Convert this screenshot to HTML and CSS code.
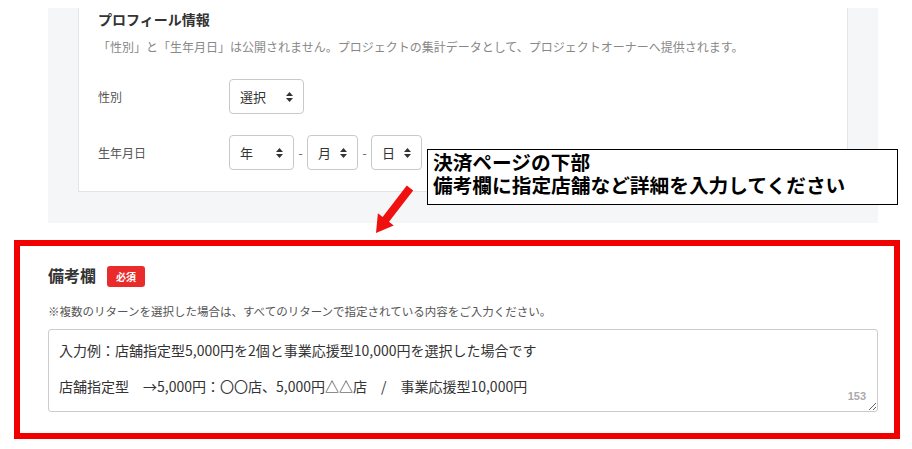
FILE: index.html
```html
<!DOCTYPE html>
<html lang="ja">
<head>
    <meta charset="UTF-8">
    <meta name="viewport" content="width=device-width, initial-scale=1.0">
    <title>備考欄</title>
    <link rel="stylesheet" href="styles.css">
</head>
<body>
    <div class="page">
        <div class="profile-panel">
            <div class="profile-card">
                <h2>プロフィール情報</h2>
                <p class="note">「性別」と「生年月日」は公開されません。プロジェクトの集計データとして、プロジェクトオーナーへ提供されます。</p>
                <div class="form-rows">
                    <div class="form-row">
                        <div class="form-label">性別</div>
                        <div class="select w-gender">選択<svg class="updown" viewBox="0 0 7 10"><path d="M3.5 0 7 4H0z M3.5 10 7 6H0z"/></svg></div>
                    </div>
                    <div class="form-row">
                        <div class="form-label">生年月日</div>
                        <div class="select w-year">年<svg class="updown" viewBox="0 0 7 10"><path d="M3.5 0 7 4H0z M3.5 10 7 6H0z"/></svg></div>
                        <span class="dash">-</span>
                        <div class="select w-small">月<svg class="updown" viewBox="0 0 7 10"><path d="M3.5 0 7 4H0z M3.5 10 7 6H0z"/></svg></div>
                        <span class="dash">-</span>
                        <div class="select w-small">日<svg class="updown" viewBox="0 0 7 10"><path d="M3.5 0 7 4H0z M3.5 10 7 6H0z"/></svg></div>
                    </div>
                </div>
            </div>
        </div>

        <div class="remarks">
            <div class="remarks-title">
                <h3>備考欄</h3>
                <span class="badge">必須</span>
            </div>
            <p class="remarks-note">※複数のリターンを選択した場合は、すべてのリターンで指定されている内容をご入力ください。</p>
            <div class="textarea-wrap">
                <textarea class="remarks-input">入力例：店舗指定型5,000円を2個と事業応援型10,000円を選択した場合です

店舗指定型　→5,000円：〇〇店、5,000円△△店　/　事業応援型10,000円</textarea>
                <span class="counter">153</span>
            </div>
        </div>

        <!-- annotation over the screenshot -->
        <div class="callout">
            <div>決済ページの下部</div>
            <div>備考欄に指定店舗など詳細を入力してください</div>
        </div>
        <svg class="arrow" viewBox="0 0 60 60" width="60" height="60">
            <polygon points="46.8,5.6 53.2,10.4 29,41.7 33.7,45.4 16,53 17.9,33.2 22.6,36.9"/>
        </svg>
    </div>
</body>
</html>
```

FILE: styles.css
```css
body {
    margin: 0;
    padding: 0;
    background: #fff;
    font-family: "Noto Sans CJK JP", "Liberation Sans", sans-serif;
    color: #333;
}
.page {
    position: relative;
    width: 912px;
    height: 449px;
    overflow: hidden;
    padding-top: 8px;
    box-sizing: border-box;
}

/* profile block */
.profile-panel {
    margin-left: 48px;
    width: 830px;
    box-sizing: border-box;
    padding: 0 30px 31px 30px;
    background: #f5f6f8;
}
.profile-card {
    background: #fff;
    border: 1px solid #e3e4e6;
    border-top: none;
    padding: 1px 19px 21px 19px;
}
.profile-card h2 {
    margin: 0;
    font-size: 14px;
    line-height: 20px;
    font-weight: bold;
    color: #333;
}
.profile-card .note {
    margin: 10px 0 0 0;
    font-size: 12px;
    line-height: 16px;
    color: #888;
}
.form-rows {
    margin-top: 24px;
    display: flex;
    flex-direction: column;
    gap: 21px;
}
.form-row {
    display: flex;
    align-items: center;
    height: 35px;
}
.form-label {
    width: 131px;
    font-size: 12px;
    color: #555;
}
.select {
    height: 35px;
    box-sizing: border-box;
    border: 1px solid #c9c9c9;
    border-radius: 4px;
    display: flex;
    align-items: center;
    justify-content: space-between;
    padding: 0 10px 0 10px;
    font-size: 13px;
    color: #333;
    background: #fff;
}
.w-gender { width: 75px; }
.w-year { width: 65px; }
.w-small { width: 51px; }
.updown {
    width: 7px;
    height: 10px;
    fill: #333;
}
.dash {
    width: 13px;
    text-align: center;
    font-size: 12px;
    color: #555;
}

/* remarks block */
.remarks {
    margin: 17px 0 0 14px;
    width: 886px;
    height: 199px;
    box-sizing: border-box;
    border: 6px solid #f20000;
    padding: 17px 16px 0 28px;
}
.remarks-title {
    display: flex;
    align-items: center;
    gap: 11px;
    height: 24px;
}
.remarks-title h3 {
    margin: 0;
    font-size: 16px;
    font-weight: bold;
    color: #333;
}
.badge {
    margin-top: 3px;
    background: #ea2b2b;
    color: #fff;
    font-size: 10px;
    font-weight: bold;
    height: 21px;
    line-height: 21px;
    padding: 0 9px;
    border-radius: 3px;
}
.remarks-note {
    margin: 16px 0 0 0;
    font-size: 11.5px;
    line-height: 16px;
    color: #555;
}
.textarea-wrap {
    position: relative;
    margin-top: 10px;
    width: 830px;
}
.remarks-input {
    display: block;
    width: 830px;
    height: 83px;
    box-sizing: border-box;
    border: 1px solid #cccccc;
    border-radius: 3px;
    padding: 11px 10px;
    font-family: "Noto Sans CJK JP", "Liberation Sans", sans-serif;
    font-size: 14px;
    line-height: 18px;
    color: #333;
    resize: vertical;
    overflow: hidden;
}
.counter {
    position: absolute;
    right: 12px;
    bottom: 10px;
    font-family: "Liberation Sans", sans-serif;
    font-size: 11px;
    font-weight: bold;
    color: #aaa;
}

/* annotation */
.callout {
    position: absolute;
    left: 427px;
    top: 149px;
    width: 471px;
    height: 56px;
    box-sizing: border-box;
    border: 1px solid #000;
    background: #fff;
    padding: 0 0 0 5px;
    font-size: 19.7px;
    line-height: 23px;
    font-weight: bold;
    color: #000;
}
.arrow {
    position: absolute;
    left: 360px;
    top: 180px;
    fill: #f01010;
}
```
